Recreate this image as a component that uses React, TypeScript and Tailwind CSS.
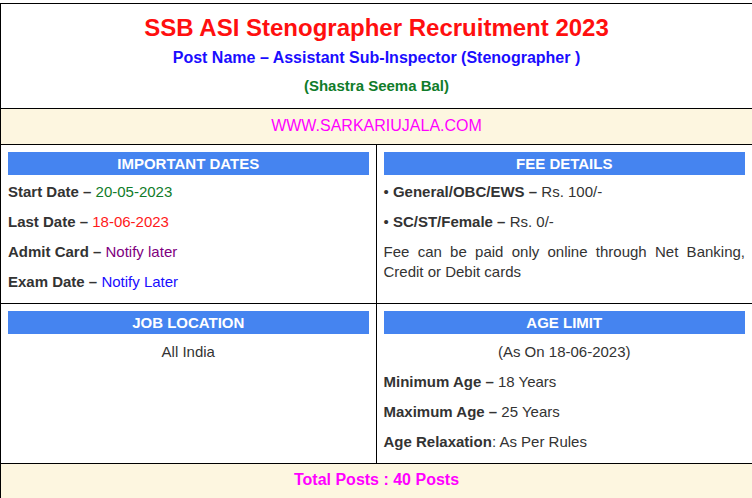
import React from "react";

const Header = ({ children }: { children: React.ReactNode }) => (
  <div className="bg-[#4584f0] text-white font-bold text-[15px] leading-[23px] h-[23px] text-center">
    {children}
  </div>
);

const P = ({ children, className = "" }: { children: React.ReactNode; className?: string }) => (
  <p className={`text-[15px] leading-[20px] mb-[10px] text-[#333] ${className}`}>{children}</p>
);

export default function App() {
  return (
    <div
      className="w-[752px] h-[498px] overflow-hidden bg-white"
      style={{ fontFamily: '"Liberation Sans", Arial, sans-serif' }}
    >
      <div className="w-[753px] mt-[3px] border-l border-t border-r border-black">
        {/* Title */}
        <div className="border-b border-black text-center pt-[8px] h-[105px]">
          <div className="text-[24px] leading-[32px] font-bold text-[#ff0f0f]">
            SSB ASI Stenographer Recruitment 2023
          </div>
          <div className="mt-[4px] text-[16px] leading-[20px] font-bold text-[#1a0dff]">
            Post Name – Assistant Sub-Inspector (Stenographer )
          </div>
          <div className="mt-[8px] text-[15px] leading-[20px] font-bold text-[#107c2a]">
            (Shastra Seema Bal)
          </div>
        </div>
        {/* Website */}
        <div className="border-b border-black bg-[#fdf6e0] h-[36px] pt-[7px] text-center text-[16px] leading-[20px] text-[#ff00ff]">
          WWW.SARKARIUJALA.COM
        </div>
        {/* Row 1 */}
        <div className="grid grid-cols-2 border-b border-black">
          <div className="border-r border-black px-[7px] pt-[7px] pb-[1px]">
            <Header>IMPORTANT DATES</Header>
            <div className="mt-[7px]">
              <P>
                <b className="text-[#333]">Start Date –</b> <span className="text-[#107c2a]">20-05-2023</span>
              </P>
              <P>
                <b>Last Date –</b> <span className="text-[#ff1a1a]">18-06-2023</span>
              </P>
              <P>
                <b>Admit Card –</b> <span className="text-[#800080]">Notify later</span>
              </P>
              <P>
                <b>Exam Date –</b> <span className="text-[#1a0dff]">Notify Later</span>
              </P>
            </div>
          </div>
          <div className="px-[7px] pt-[7px]">
            <Header>FEE DETAILS</Header>
            <div className="mt-[7px]">
              <P>
                • <b>General/OBC/EWS –</b> Rs. 100/-
              </P>
              <P>
                • <b>SC/ST/Female –</b> Rs. 0/-
              </P>
              <P className="text-justify">
                Fee can be paid only online through Net Banking, Credit or Debit cards
              </P>
            </div>
          </div>
        </div>
        {/* Row 2 */}
        <div className="grid grid-cols-2 border-b border-black">
          <div className="border-r border-black px-[7px] pt-[7px]">
            <Header>JOB LOCATION</Header>
            <div className="mt-[8px]">
              <P className="text-center">All India</P>
            </div>
          </div>
          <div className="px-[7px] pt-[7px] pb-[1px]">
            <Header>AGE LIMIT</Header>
            <div className="mt-[8px]">
              <P className="text-center mb-[9.5px]">(As On 18-06-2023)</P>
              <P className="mb-[9.5px]">
                <b>Minimum Age –</b> 18 Years
              </P>
              <P className="mb-[9.5px]">
                <b>Maximum Age –</b> 25 Years
              </P>
              <P>
                <b>Age Relaxation</b>: As Per Rules
              </P>
            </div>
          </div>
        </div>
        {/* Total */}
        <div className="bg-[#fdf6e0] h-[40px] pt-[6px] text-center text-[16px] leading-[20px] font-bold text-[#ff00ff]">
          Total Posts : 40 Posts
        </div>
      </div>
    </div>
  );
}
